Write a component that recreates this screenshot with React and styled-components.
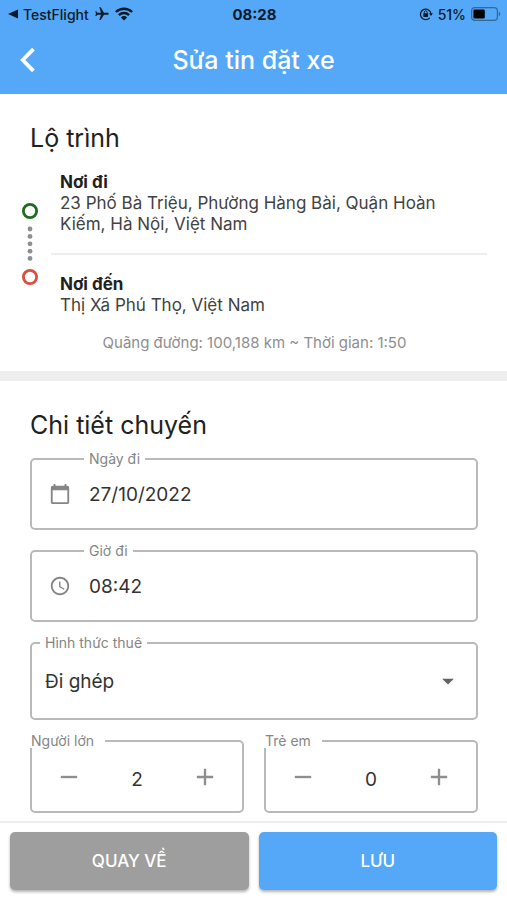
import { useState } from 'react';
import styled, { createGlobalStyle } from 'styled-components';
import {
  MdAccessTime,
  MdAdd,
  MdArrowDropDown,
  MdCalendarToday,
  MdFlight,
  MdRemove,
} from 'react-icons/md';

const StatusBar = () => (
  <StatusRow>
    <StatusGroup>
      <svg width="10" height="10" viewBox="0 0 10 10" aria-hidden="true">
        <path d="M0 5L10 0.6V9.4Z" fill="currentColor" />
      </svg>
      <StatusText>TestFlight</StatusText>
      <PlaneIcon size="16px" />
      <svg width="18" height="14" viewBox="0 0 18 14" aria-hidden="true">
        <g fill="none" stroke="currentColor" strokeWidth="2.4">
          <path d="M0.9 5A11.6 11.6 0 0 1 17.1 5" />
          <path d="M3.9 8.1A7.3 7.3 0 0 1 14.1 8.1" />
        </g>
        <path d="M9 13.6L5.9 10.4A4.4 4.4 0 0 1 12.1 10.4Z" fill="currentColor" />
      </svg>
    </StatusGroup>
    <Clock>08:28</Clock>
    <StatusGroup $end>
      <svg width="14" height="14" viewBox="0 0 14 14" aria-hidden="true">
        <path
          d="M10.8 10.8A5.3 5.3 0 1 1 12 7"
          fill="none"
          stroke="currentColor"
          strokeWidth="1.3"
        />
        <path d="M10.1 6.2H13.9L12 9Z" fill="currentColor" />
        <rect x="4.3" y="6.2" width="4.8" height="3.7" rx="0.6" fill="currentColor" />
        <path
          d="M5.3 6.4V5.2A1.4 1.4 0 0 1 8.1 5.2V6.4"
          fill="none"
          stroke="currentColor"
          strokeWidth="1"
        />
      </svg>
      <StatusText>51%</StatusText>
      <svg width="30" height="14" viewBox="0 0 30 14" aria-hidden="true">
        <rect
          x="0.6"
          y="0.6"
          width="25.8"
          height="12.8"
          rx="3.4"
          fill="none"
          stroke="currentColor"
          strokeOpacity="0.45"
          strokeWidth="1.2"
        />
        <path d="M27.8 4.7A2.6 2.6 0 0 1 27.8 9.3Z" fill="currentColor" fillOpacity="0.5" />
        <rect x="2.4" y="2.4" width="11.4" height="9.2" rx="1.4" fill="#000" />
      </svg>
    </StatusGroup>
  </StatusRow>
);

const RouteRail = () => (
  <svg width="16" height="82" viewBox="0 0 16 82" aria-hidden="true">
    <circle cx="8" cy="8" r="6.6" fill="none" stroke="#1f6b1f" strokeWidth="2.8" />
    <g fill="#8e8e8e">
      {[26, 33.4, 40.8, 48.2, 55.4].map((cy) => (
        <circle key={cy} cx="8" cy={cy} r="2.4" />
      ))}
    </g>
    <circle cx="8" cy="74" r="6.6" fill="none" stroke="#dc4e41" strokeWidth="2.8" />
  </svg>
);

const Stepper = ({ label, initial }) => {
  const [count, setCount] = useState(initial);
  return (
    <Outline>
      <StepperLegend>{label}</StepperLegend>
      <StepperRow>
        <StepButton
          type="button"
          aria-label={`Giảm ${label}`}
          onClick={() => setCount(Math.max(0, count - 1))}
        >
          <MdRemove size="28px" />
        </StepButton>
        <Count>{count}</Count>
        <StepButton
          type="button"
          aria-label={`Tăng ${label}`}
          onClick={() => setCount(count + 1)}
        >
          <MdAdd size="28px" />
        </StepButton>
      </StepperRow>
    </Outline>
  );
};

const App = () => {
  const [date, setDate] = useState('27/10/2022');
  const [time, setTime] = useState('08:42');
  return (
    <Page>
      <GlobalStyle />
      <Header>
        <StatusBar />
        <AppBar>
          <BackButton type="button" aria-label="Quay lại">
            <svg width="16" height="26" viewBox="0 0 16 26" aria-hidden="true">
              <path
                d="M13.4 2.2L2.8 13L13.4 23.8"
                fill="none"
                stroke="currentColor"
                strokeWidth="3.8"
              />
            </svg>
          </BackButton>
          <Title>Sửa tin đặt xe</Title>
        </AppBar>
      </Header>
      <main>
        <RouteSection>
          <SectionTitle>Lộ trình</SectionTitle>
          <Route>
            <RouteRail />
            <Stops>
              <Stop>
                <StopName>Nơi đi</StopName>
                <Address>
                  23 Phố Bà Triệu, Phường Hàng Bài, Quận Hoàn Kiếm, Hà Nội, Việt Nam
                </Address>
              </Stop>
              <Stop>
                <StopName>Nơi đến</StopName>
                <Address>Thị Xã Phú Thọ, Việt Nam</Address>
              </Stop>
            </Stops>
          </Route>
          <Distance>Quãng đường: 100,188 km ~ Thời gian: 1:50</Distance>
        </RouteSection>
        <DetailSection>
          <SectionTitle>Chi tiết chuyến</SectionTitle>
          <Fields>
            <Outline>
              <Legend $inset="52px">
                <label htmlFor="date">Ngày đi</label>
              </Legend>
              <InputRow>
                <MdCalendarToday size="22px" />
                <TextInput id="date" value={date} onChange={(e) => setDate(e.target.value)} />
              </InputRow>
            </Outline>
            <Outline>
              <Legend $inset="52px">
                <label htmlFor="time">Giờ đi</label>
              </Legend>
              <InputRow>
                <MdAccessTime size="22px" />
                <TextInput id="time" value={time} onChange={(e) => setTime(e.target.value)} />
              </InputRow>
            </Outline>
            <Outline>
              <Legend $inset="8px">
                <label htmlFor="type">Hình thức thuê</label>
              </Legend>
              <SelectRow>
                <Select id="type" defaultValue="Đi ghép">
                  <option>Đi ghép</option>
                </Select>
                <SelectArrow size="28px" />
              </SelectRow>
            </Outline>
            <Steppers>
              <Stepper label="Người lớn" initial={2} />
              <Stepper label="Trẻ em" initial={0} />
            </Steppers>
          </Fields>
        </DetailSection>
      </main>
      <Footer>
        <ActionButton type="button" $color="#9e9e9e">
          QUAY VỀ
        </ActionButton>
        <ActionButton type="button" $color="#54a8f7">
          LƯU
        </ActionButton>
      </Footer>
    </Page>
  );
};
export default App;

const GlobalStyle = createGlobalStyle`
  * {
    box-sizing: border-box;
  }
  body {
    margin: 0;
    background: #fff;
    color: #212121;
    font-family: Inter, Roboto, 'Liberation Sans', sans-serif;
  }
  button, input, select {
    font-family: inherit;
  }
  svg {
    flex-shrink: 0;
  }
`;
const Page = styled.div`
  min-height: 100vh;
  display: flex;
  flex-direction: column;
`;
const Header = styled.header`
  background: #54a8f7;
`;
const StatusRow = styled.div`
  display: grid;
  grid-template-columns: 1fr auto 1fr;
  align-items: center;
  height: 28px;
  padding: 0 6px 0 8px;
  color: #0b1a28;
`;
const StatusGroup = styled.div`
  display: flex;
  align-items: center;
  gap: 5px;
  justify-content: ${({ $end }) => ($end ? 'flex-end' : 'flex-start')};
`;
const StatusText = styled.span`
  font-size: 14px;
  font-weight: 500;
`;
const PlaneIcon = styled(MdFlight)`
  transform: rotate(90deg);
`;
const Clock = styled.span`
  font-size: 15px;
  font-weight: 700;
`;
const AppBar = styled.div`
  display: grid;
  grid-template-columns: 56px 1fr 56px;
  align-items: center;
  height: 66px;
  padding-bottom: 2px;
  color: #fff;
`;
const BackButton = styled.button`
  display: flex;
  justify-content: center;
  padding: 0;
  border: 0;
  background: none;
  color: inherit;
  cursor: pointer;
`;
const Title = styled.h1`
  margin: 0;
  font-size: 25px;
  font-weight: 500;
  text-align: center;
`;
const RouteSection = styled.section`
  padding: 28px 20px 18px 22px;
  border-bottom: 10px solid #eee;
`;
const SectionTitle = styled.h2`
  margin: 0 8px;
  font-size: 25px;
  font-weight: 400;
  line-height: 32px;
`;
const Route = styled.div`
  display: flex;
  align-items: center;
  gap: 13px;
  margin-top: 18px;
`;
const Stops = styled.div`
  flex-grow: 1;
`;
const Stop = styled.div`
  padding-left: 9px;
  padding-right: 32px;
  & + & {
    margin-top: 18px;
    padding-top: 19px;
    border-top: 2px solid #eee;
  }
`;
const StopName = styled.div`
  font-size: 17px;
  font-weight: 700;
  line-height: 21px;
`;
const Address = styled.div`
  font-size: 17px;
  line-height: 21px;
  color: #424242;
`;
const Distance = styled.p`
  margin: 17px 0 0;
  font-size: 15px;
  line-height: 20px;
  text-align: center;
  color: #8e8e8e;
`;
const DetailSection = styled.section`
  padding: 28px 29px 8px 30px;
  ${SectionTitle} {
    margin: 0;
  }
`;
const Fields = styled.div`
  display: flex;
  flex-direction: column;
  gap: 12px;
  margin-top: 9px;
`;
const Outline = styled.fieldset`
  min-width: 0;
  margin: 0;
  padding: 0;
  border: 2px solid #b9b9b9;
  border-radius: 5px;
`;
const Legend = styled.legend`
  margin-left: ${({ $inset }) => $inset};
  padding: 0 5px;
  font-size: 14px;
  line-height: 18px;
  color: #858585;
`;
const StepperLegend = styled(Legend)`
  margin-left: -2px;
  padding: 0 11px 0 1px;
  background: #fff;
  line-height: 14px;
`;
const InputRow = styled.div`
  display: flex;
  align-items: center;
  height: 60px;
  padding: 0 14px 8px 17px;
  color: #858585;
`;
const TextInput = styled.input`
  flex-grow: 1;
  min-width: 0;
  margin-left: 18px;
  padding: 0;
  border: 0;
  outline: 0;
  background: none;
  font-size: 19px;
  color: #333;
`;
const SelectRow = styled.div`
  position: relative;
  display: flex;
  align-items: center;
  height: 66px;
  padding-bottom: 8px;
`;
const Select = styled.select`
  appearance: none;
  flex-grow: 1;
  height: 40px;
  padding: 0 46px 0 13px;
  border: 0;
  outline: 0;
  background: none;
  font-size: 19px;
  color: #333;
`;
const SelectArrow = styled(MdArrowDropDown)`
  position: absolute;
  right: 14px;
  color: #616161;
  pointer-events: none;
`;
const Steppers = styled.div`
  display: grid;
  grid-template-columns: 1fr 1fr;
  gap: 20px;
  margin-top: 2px;
`;
const StepperRow = styled.div`
  display: flex;
  align-items: center;
  justify-content: space-between;
  height: 63px;
  padding: 0 23px 6px;
`;
const StepButton = styled.button`
  display: flex;
  padding: 0;
  border: 0;
  background: none;
  color: #8e8e8e;
  cursor: pointer;
`;
const Count = styled.output`
  padding-top: 6px;
  font-size: 19px;
  color: #333;
`;
const Footer = styled.footer`
  display: grid;
  grid-template-columns: 1fr 1fr;
  gap: 10px;
  margin-top: auto;
  padding: 9px 10px 10px;
  border-top: 2px solid #eee;
`;
const ActionButton = styled.button`
  height: 58px;
  border: 0;
  border-radius: 5px;
  background: ${({ $color }) => $color};
  box-shadow: 0 2px 3px rgba(0, 0, 0, 0.3);
  font-size: 17px;
  font-weight: 500;
  color: #fff;
  cursor: pointer;
`;
